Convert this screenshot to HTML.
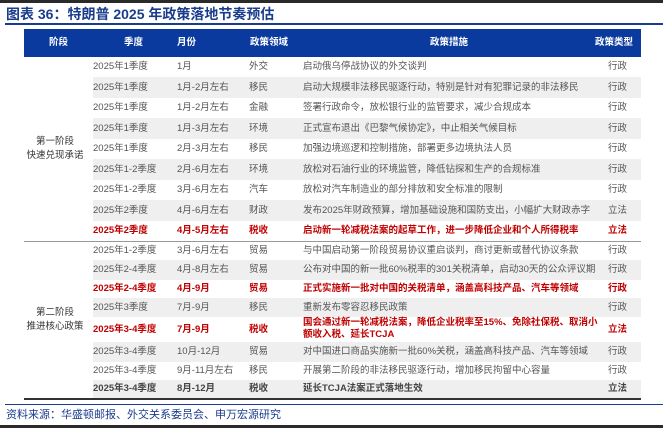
<!DOCTYPE html>
<html><head><meta charset="utf-8"><style>
*{margin:0;padding:0;box-sizing:border-box}
body{width:663px;height:428px;background:#fff;position:relative;overflow:hidden;font-family:"Liberation Sans","Noto Sans CJK SC",sans-serif;color:#555;font-size:9.5px}
.top{position:absolute;left:0;top:0;width:663px;height:3px;background:#2a2a2a}
.bot{position:absolute;left:0;top:425px;width:663px;height:3px;background:#2a2a2a}
.title{position:absolute;left:6px;top:5px;font-size:14px;font-weight:bold;color:#1a3c8c;white-space:nowrap;line-height:18px}
.tl{position:absolute;left:5px;top:23px;width:658px;height:2px;background:#1a3c8c}
.hdr{position:absolute;left:24px;top:29px;width:617px;height:28px;background:#0b3a9e;color:#fff;font-weight:bold;font-size:9.5px}
.hdr span{position:absolute;white-space:nowrap;top:0;line-height:28px}
.r{position:absolute;left:0;width:663px}
.r span{position:absolute;white-space:nowrap;top:0;height:100%;display:flex;align-items:center;line-height:12px}
.g{background:linear-gradient(#efefef,#efefef) no-repeat 93px 0/548px 100%}
.red{color:#c00000;font-weight:bold}
.b{font-weight:bold;color:#444}
.ph{position:absolute;width:70px;left:20px;text-align:center;line-height:14px;color:#333;font-size:9.5px}
.ln{position:absolute;left:24px;width:617px;height:1px;background:#999}
.src{position:absolute;left:6px;top:407px;font-size:11px;color:#1a3c8c;white-space:nowrap;line-height:16px}
.sl{position:absolute;left:5px;top:404px;width:658px;height:1px;background:#1a3c8c}
</style></head><body>
<div class="top"></div>
<div class="title">图表 36：特朗普 2025 年政策落地节奏预估</div>
<div class="tl"></div>
<div class="hdr">
<span style="left:25px">阶段</span>
<span style="left:100px">季度</span>
<span style="left:153px">月份</span>
<span style="left:226px">政策领域</span>
<span style="left:406px">政策措施</span>
<span style="left:571px">政策类型</span>
</div>
<div id="rows"></div>
<div class="ph" style="top:135px">第一阶段<br>快速兑现承诺</div>
<div class="ph" style="top:306px">第二阶段<br>推进核心政策</div>
<div class="ln" style="top:241px"></div>
<div class="ln" style="top:398px;background:#333;height:1.5px"></div>
<div class="sl"></div>
<div class="src">资料来源：华盛顿邮报、外交关系委员会、申万宏源研究</div>
<div class="bot"></div>
<script>
var d=[
[57,20,"","2025年1季度","1月","外交","启动俄乌停战协议的外交谈判","行政"],
[77,21,"g","2025年1季度","1月-2月左右","移民","启动大规模非法移民驱逐行动，特别是针对有犯罪记录的非法移民","行政"],
[98,20,"","2025年1季度","1月-2月左右","金融","签署行政命令，放松银行业的监管要求，减少合规成本","行政"],
[118,21,"g","2025年1季度","1月-3月左右","环境","正式宣布退出《巴黎气候协定》，中止相关气候目标","行政"],
[139,20,"","2025年1季度","2月-3月左右","移民","加强边境巡逻和控制措施，部署更多边境执法人员","行政"],
[159,21,"g","2025年1-2季度","2月-6月左右","环境","放松对石油行业的环境监管，降低钻探和生产的合规标准","行政"],
[180,20,"","2025年1-2季度","3月-6月左右","汽车","放松对汽车制造业的部分排放和安全标准的限制","行政"],
[200,21,"g","2025年2季度","4月-6月左右","财政","发布2025年财政预算，增加基础设施和国防支出，小幅扩大财政赤字","立法"],
[221,20,"red","2025年2季度","4月-5月左右","税收","启动新一轮减税法案的起草工作，进一步降低企业和个人所得税率","立法"],
[241,19,"","2025年1-2季度","3月-6月左右","贸易","与中国启动第一阶段贸易协议重启谈判，商讨更新或替代协议条款","行政"],
[260,20,"g","2025年2-4季度","4月-8月左右","贸易","公布对中国的新一批60%税率的301关税清单，启动30天的公众评议期","行政"],
[280,18,"red","2025年2-4季度","4月-9月","贸易","正式实施新一批对中国的关税清单，涵盖高科技产品、汽车等领域","行政"],
[298,19,"g","2025年3季度","7月-9月","移民","重新发布零容忍移民政策","行政"],
[317,25,"red","2025年3-4季度","7月-9月","税收","国会通过新一轮减税法案，降低企业税率至15%、免除社保税、取消小<br>额收入税、延长TCJA","立法"],
[342,20,"g","2025年3-4季度","10月-12月","贸易","对中国进口商品实施新一批60%关税，涵盖高科技产品、汽车等领域","行政"],
[362,18,"","2025年3-4季度","9月-11月左右","移民","开展第二阶段的非法移民驱逐行动，增加移民拘留中心容量","行政"],
[380,18,"g b","2025年3-4季度","8月-12月","税收","延长TCJA法案正式落地生效","立法"]];
var h="";
d.forEach(function(r){
h+='<div class="r '+r[2]+'" style="top:'+r[0]+'px;height:'+r[1]+'px">'+
'<span style="left:93px">'+r[3]+'</span>'+
'<span style="left:177px">'+r[4]+'</span>'+
'<span style="left:249px">'+r[5]+'</span>'+
'<span style="left:303px;display:block;padding-top:'+(r[6].indexOf("<br>")>0?0:(r[1]-12)/2)+'px">'+r[6]+'</span>'+
'<span style="left:608px">'+r[7]+'</span></div>';
});
document.getElementById("rows").innerHTML=h;
</script>
</body></html>
